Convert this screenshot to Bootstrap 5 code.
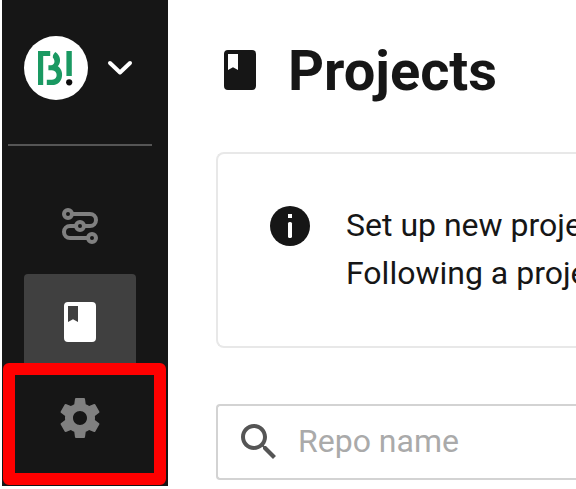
<!DOCTYPE html>
<html lang="en">
<head>
<meta charset="utf-8">
<meta name="viewport" content="width=device-width, initial-scale=1">
<title>Projects</title>
<link href="https://cdn.jsdelivr.net/npm/bootstrap@5.3.0/dist/css/bootstrap.min.css" rel="stylesheet">
<style>
  body { font-family: Roboto, sans-serif; color: #161616; height: 489px; }
  .side-panel { width: 166px; height: 486px; margin-left: 2px; background: #161616; }
  .org-switch { height: 144px; padding: 36px 0 0 22px; gap: 16px; }
  .org-logo { width: 64px; height: 64px; }
  .org-chevron { width: 32px; margin-top: 16px; }
  .side-rule { width: 144px; height: 2px; margin: 0 0 32px 6px; background: #555; }
  .side-link { width: 112px; height: 96px; margin-left: 22px; color: #808080; }
  .side-link.active { background: #404040; color: #fff; border-radius: 4px; }
  .highlight-box { left: 3px; top: 363px; width: 163px; height: 122px; border: 12px solid #f00; border-radius: 6px; }
  .main-area { padding-left: 48px; min-width: 0; }
  .page-head { height: 152px; padding-top: 36px; }
  .page-title { font-size: 56px; line-height: 70px; font-weight: 700; margin-left: 24px; }
  .notice { height: 196px; padding: 47px 0 0 52px; border: 2px solid #e8e8e8; border-right: 0; border-radius: 8px 0 0 8px; }
  .notice svg { margin-top: 5px; margin-right: 36px; }
  .notice-text { font-size: 32px; line-height: 48px; }
  .repo-filter { height: 76px; margin-top: 56px; border: 2px solid #d3d3d3; border-right: 0; border-radius: 4px 0 0 4px; padding-left: 17px; }
  .repo-filter input { font-size: 32px; margin-left: 15px; padding: 0 0 2px; min-width: 0; color: #161616; }
  .repo-filter input::placeholder { color: #aaa; opacity: 1; }
</style>
</head>
<body class="bg-white overflow-hidden position-relative d-flex align-items-start">
<nav class="side-panel d-flex flex-column flex-shrink-0">
  <div class="org-switch d-flex align-items-start">
    <svg class="org-logo flex-shrink-0" viewBox="0 0 64 64">
      <circle cx="32" cy="32" r="32" fill="#fff"/>
      <path d="M14 15H26.2V20H19.2V49H14Z" fill="#1a9962"/>
      <path d="M31.4 16C36.8 19.6 37.4 26.4 33.8 30.2C40.6 34 40 49 28 49H22.8V43.8H28C34.4 43.4 34 34.2 28 34.2H24.4V29.2H27C30.8 28.8 31.6 24.6 28.8 21.4C28.8 19 29.6 17.6 31.4 16Z" fill="#1a9962"/>
      <path d="M42.4 15H47.8V40H42.4Z" fill="#1a9962"/>
      <circle cx="45.2" cy="46.3" r="3.1" fill="#0b0b0b"/>
    </svg>
    <svg class="org-chevron" width="32" height="32" viewBox="0 0 32 32" fill="none" stroke="#fff" stroke-width="4" stroke-linecap="round" stroke-linejoin="round"><path d="M6 11 16 20.5 26 11"/></svg>
  </div>
  <div class="side-rule flex-shrink-0"></div>
  <a class="side-link d-flex align-items-center justify-content-center" href="#" aria-label="Pipelines">
    <svg width="48" height="48" viewBox="0 0 48 48" fill="none" stroke="currentColor" stroke-width="4">
      <path d="M17 12H34a6 6 0 0 1 0 12H29M19 24H14a6 6 0 0 0 0 12H31"/>
      <circle cx="12" cy="12" r="4"/><circle cx="24" cy="24" r="4"/><circle cx="36" cy="36" r="4"/>
    </svg>
  </a>
  <a class="side-link active d-flex align-items-center justify-content-center" href="#" aria-label="Projects">
    <svg width="48" height="48" viewBox="0 0 48 48" fill="currentColor" fill-rule="evenodd"><path d="M12 4H36a4 4 0 0 1 4 4V40a4 4 0 0 1-4 4H12a4 4 0 0 1-4-4V8a4 4 0 0 1 4-4ZM12 8V24L17 21.3 22 24V8Z"/></svg>
  </a>
  <a class="side-link d-flex align-items-center justify-content-center" href="#" aria-label="Settings">
    <svg width="48" height="48" viewBox="0 0 24 24" fill="currentColor"><path d="M19.43 12.98c.04-.32.07-.64.07-.98s-.03-.66-.07-.98l2.11-1.65c.19-.15.24-.42.12-.64l-2-3.46c-.12-.22-.39-.3-.61-.22l-2.49 1c-.52-.4-1.08-.73-1.69-.98l-.38-2.65C14.46 2.18 14.25 2 14 2h-4c-.25 0-.46.18-.49.42l-.38 2.65c-.61.25-1.17.59-1.69.98l-2.49-1c-.23-.09-.49 0-.61.22l-2 3.46c-.13.22-.07.49.12.64l2.11 1.65c-.04.32-.07.65-.07.98s.03.66.07.98l-2.11 1.65c-.19.15-.24.42-.12.64l2 3.46c.12.22.39.3.61.22l2.49-1c.52.4 1.08.73 1.69.98l.38 2.65c.03.24.24.42.49.42h4c.25 0 .46-.18.49-.42l.38-2.65c.61-.25 1.17-.59 1.69-.98l2.49 1c.23.09.49 0 .61-.22l2-3.46c.12-.22.07-.49-.12-.64l-2.11-1.65zM12 15.5c-1.93 0-3.5-1.57-3.5-3.5s1.57-3.5 3.5-3.5 3.5 1.57 3.5 3.5-1.57 3.5-3.5 3.5z"/></svg>
  </a>
</nav>
<main class="main-area flex-grow-1 overflow-hidden">
  <header class="page-head d-flex align-items-start">
    <svg class="flex-shrink-0 mt-2" width="48" height="52" viewBox="0 -2 48 52" fill="#161616" fill-rule="evenodd"><path d="M12 4H36a4 4 0 0 1 4 4V40a4 4 0 0 1-4 4H12a4 4 0 0 1-4-4V8a4 4 0 0 1 4-4ZM12 8V24L17 21.3 22 24V8Z"/></svg>
    <h1 class="page-title mb-0">Projects</h1>
  </header>
  <section class="notice d-flex align-items-start overflow-hidden">
    <svg class="flex-shrink-0" width="40" height="40" viewBox="0 0 40 40"><circle cx="20" cy="20" r="20" fill="#161616"/><path d="M18 8h4v4h-4z" fill="#fff"/><rect x="18" y="16" width="4" height="16" rx="1.6" fill="#fff"/></svg>
    <div class="notice-text text-nowrap">Set up new proje<br>Following a proje</div>
  </section>
  <div class="repo-filter d-flex align-items-center">
    <svg class="flex-shrink-0" width="48" height="48" viewBox="0 0 24 24" fill="#555"><path d="M15.5 14h-.79l-.28-.27C15.41 12.59 16 11.11 16 9.5 16 5.91 13.09 3 9.5 3S3 5.91 3 9.5 5.91 16 9.5 16c1.61 0 3.09-.59 4.23-1.57l.27.28v.79l5 4.99L20.49 19l-4.99-5zm-6 0C7.01 14 5 11.99 5 9.5S7.01 5 9.5 5 14 7.01 14 9.5 11.99 14 9.5 14z"/></svg>
    <input class="border-0 bg-transparent flex-grow-1" type="text" placeholder="Repo name" aria-label="Repo name">
  </div>
</main>
<div class="highlight-box position-absolute pe-none"></div>
<script src="https://cdn.jsdelivr.net/npm/bootstrap@5.3.0/dist/js/bootstrap.bundle.min.js"></script>
</body>
</html>
